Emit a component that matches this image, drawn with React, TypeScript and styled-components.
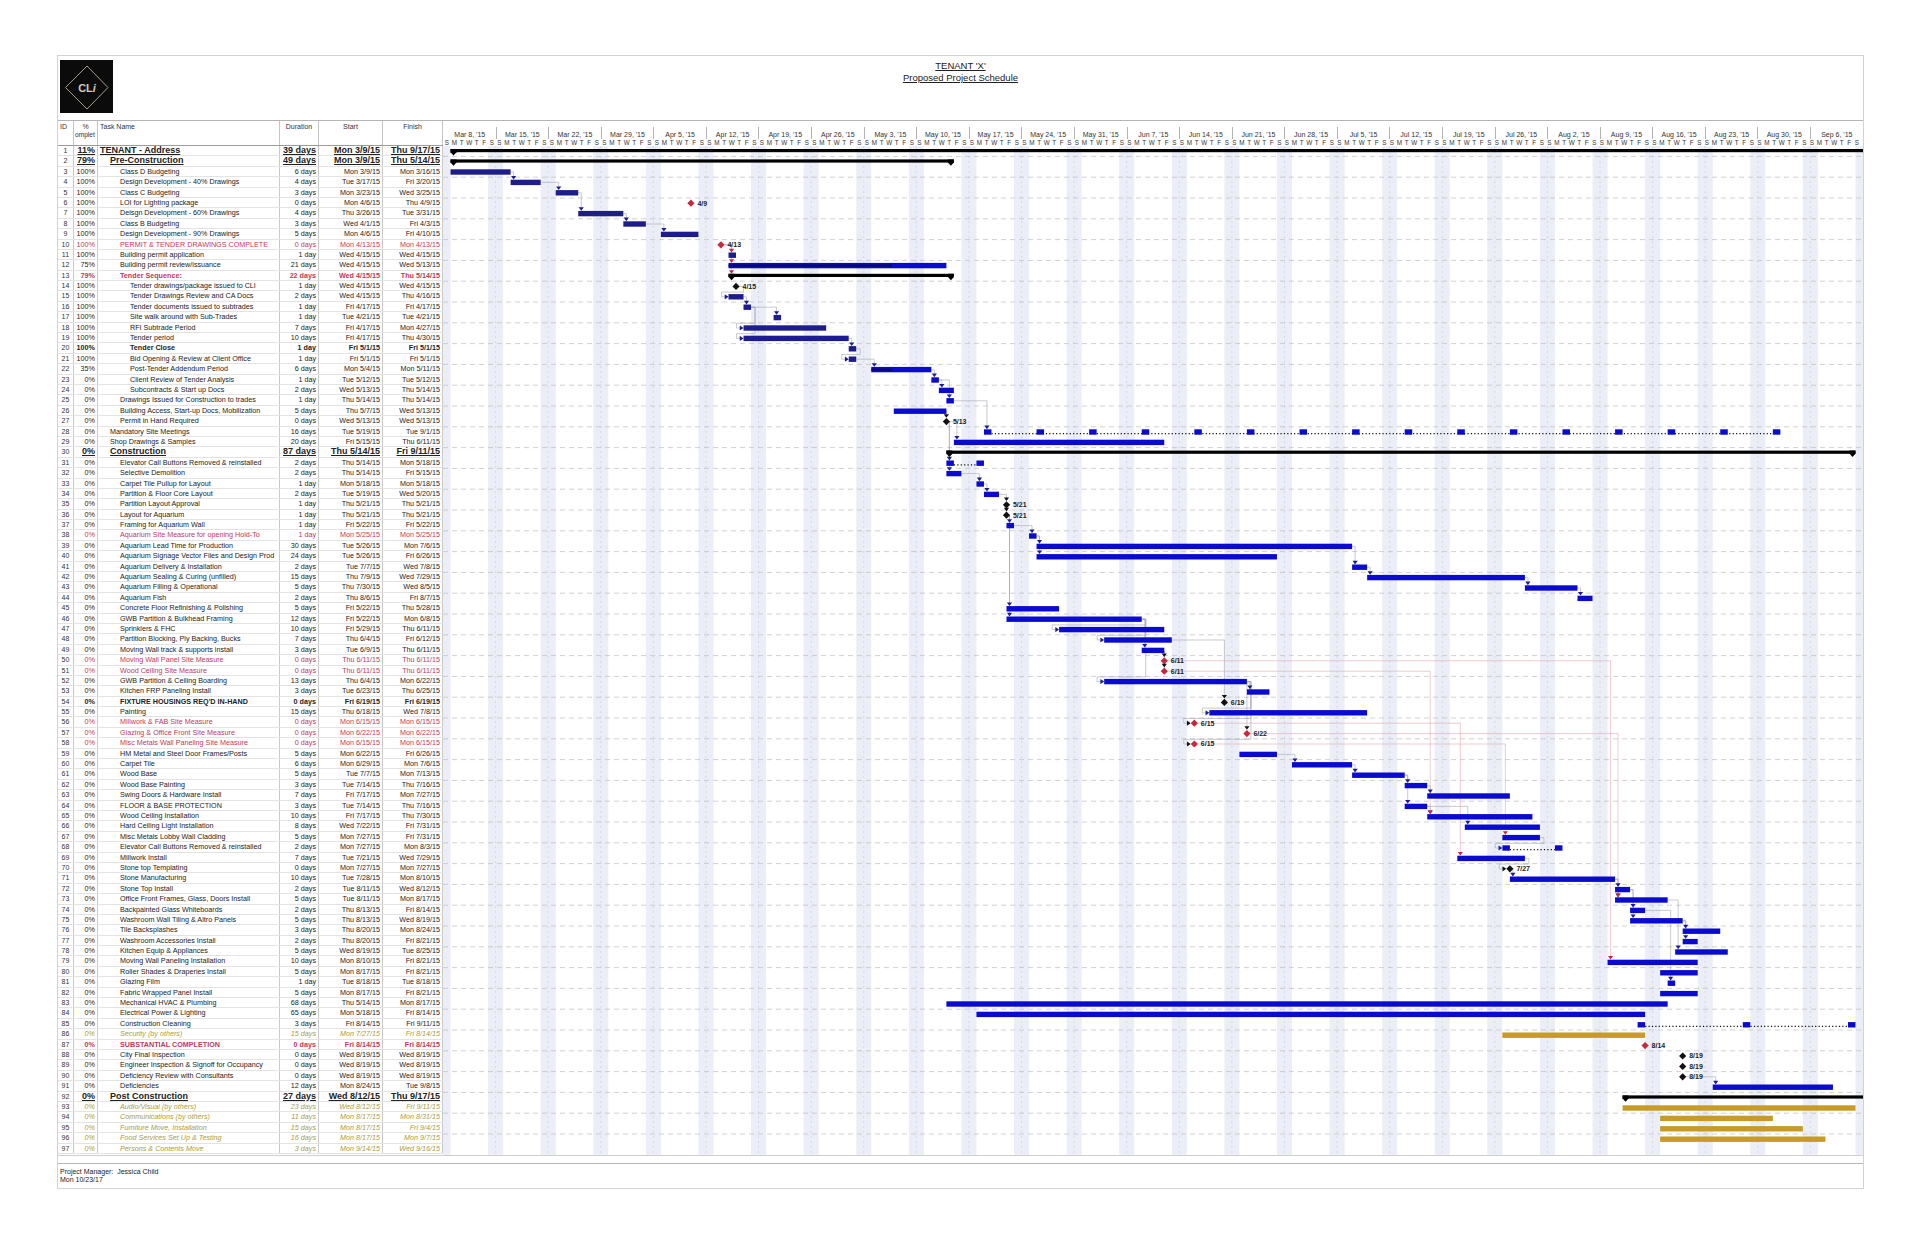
import React from "react";
import styled, { createGlobalStyle } from "styled-components";

const RH = 10.4;
const WEEKS = 27;
const CHART_W = 1420;
const DW = CHART_W / (WEEKS * 7);
const WEEK_W = CHART_W / WEEKS;
const ROWS = 97;
const H = ROWS * RH;

const NAVY = "#1d1d8c";
const BLUE = "#0b0bd0";
const GOLD = "#c79b25";
const RED = "#c8283c";
const REDTXT = "#c2385a";
const OLIVE = "#a99d45";

type Kind = "n" | "s" | "r" | "rb" | "b" | "g";
type Row = [string, string, number, string, string, string, Kind];

const data: Row[] = [
  ["11%", "TENANT - Address", 1, "39 days", "Mon 3/9/15", "Thu 9/17/15", "s"],
  ["79%", "Pre-Construction", 2, "49 days", "Mon 3/9/15", "Thu 5/14/15", "s"],
  ["100%", "Class D Budgeting", 3, "6 days", "Mon 3/9/15", "Mon 3/16/15", "n"],
  ["100%", "Design Development - 40% Drawings", 3, "4 days", "Tue 3/17/15", "Fri 3/20/15", "n"],
  ["100%", "Class C Budgeting", 3, "3 days", "Mon 3/23/15", "Wed 3/25/15", "n"],
  ["100%", "LOI for Lighting package", 3, "0 days", "Mon 4/6/15", "Thu 4/9/15", "n"],
  ["100%", "Deisgn Development - 60% Drawings", 3, "4 days", "Thu 3/26/15", "Tue 3/31/15", "n"],
  ["100%", "Class B Budgeting", 3, "3 days", "Wed 4/1/15", "Fri 4/3/15", "n"],
  ["100%", "Design Development - 90% Drawings", 3, "5 days", "Mon 4/6/15", "Fri 4/10/15", "n"],
  ["100%", "PERMIT & TENDER DRAWINGS COMPLETE", 3, "0 days", "Mon 4/13/15", "Mon 4/13/15", "r"],
  ["100%", "Building permit application", 3, "1 day", "Wed 4/15/15", "Wed 4/15/15", "n"],
  ["75%", "Building permit review/issuance", 3, "21 days", "Wed 4/15/15", "Wed 5/13/15", "n"],
  ["79%", "Tender Sequence:", 3, "22 days", "Wed 4/15/15", "Thu 5/14/15", "rb"],
  ["100%", "Tender drawings/package issued to CLI", 4, "1 day", "Wed 4/15/15", "Wed 4/15/15", "n"],
  ["100%", "Tender Drawings Review and CA Docs", 4, "2 days", "Wed 4/15/15", "Thu 4/16/15", "n"],
  ["100%", "Tender documents issued to subtrades", 4, "1 day", "Fri 4/17/15", "Fri 4/17/15", "n"],
  ["100%", "Site walk around with Sub-Trades", 4, "1 day", "Tue 4/21/15", "Tue 4/21/15", "n"],
  ["100%", "RFI Subtrade Period", 4, "7 days", "Fri 4/17/15", "Mon 4/27/15", "n"],
  ["100%", "Tender period", 4, "10 days", "Fri 4/17/15", "Thu 4/30/15", "n"],
  ["100%", "Tender Close", 4, "1 day", "Fri 5/1/15", "Fri 5/1/15", "b"],
  ["100%", "Bid Opening & Review at Client Office", 4, "1 day", "Fri 5/1/15", "Fri 5/1/15", "n"],
  ["35%", "Post-Tender Addendum Period", 4, "6 days", "Mon 5/4/15", "Mon 5/11/15", "n"],
  ["0%", "Client Review of Tender Analysis", 4, "1 day", "Tue 5/12/15", "Tue 5/12/15", "n"],
  ["0%", "Subcontracts & Start up Docs", 4, "2 days", "Wed 5/13/15", "Thu 5/14/15", "n"],
  ["0%", "Drawings Issued for Construction to trades", 3, "1 day", "Thu 5/14/15", "Thu 5/14/15", "n"],
  ["0%", "Building Access, Start-up Docs, Mobilization", 3, "5 days", "Thu 5/7/15", "Wed 5/13/15", "n"],
  ["0%", "Permit in Hand Required", 3, "0 days", "Wed 5/13/15", "Wed 5/13/15", "n"],
  ["0%", "Mandatory Site Meetings", 2, "16 days", "Tue 5/19/15", "Tue 9/1/15", "n"],
  ["0%", "Shop Drawings & Samples", 2, "20 days", "Fri 5/15/15", "Thu 6/11/15", "n"],
  ["0%", "Construction", 2, "87 days", "Thu 5/14/15", "Fri 9/11/15", "s"],
  ["0%", "Elevator Call Buttons Removed & reinstalled", 3, "2 days", "Thu 5/14/15", "Mon 5/18/15", "n"],
  ["0%", "Selective Demolition", 3, "2 days", "Thu 5/14/15", "Fri 5/15/15", "n"],
  ["0%", "Carpet Tile Pullup for Layout", 3, "1 day", "Mon 5/18/15", "Mon 5/18/15", "n"],
  ["0%", "Partition & Floor Core Layout", 3, "2 days", "Tue 5/19/15", "Wed 5/20/15", "n"],
  ["0%", "Partition Layout Approval", 3, "1 day", "Thu 5/21/15", "Thu 5/21/15", "n"],
  ["0%", "Layout for Aquarium", 3, "1 day", "Thu 5/21/15", "Thu 5/21/15", "n"],
  ["0%", "Framing for Aquarium Wall", 3, "1 day", "Fri 5/22/15", "Fri 5/22/15", "n"],
  ["0%", "Aquarium Site Measure for opening Hold-To", 3, "1 day", "Mon 5/25/15", "Mon 5/25/15", "r"],
  ["0%", "Aquarium Lead Time for Production", 3, "30 days", "Tue 5/26/15", "Mon 7/6/15", "n"],
  ["0%", "Aquarium Signage Vector Files and Design Prod", 3, "24 days", "Tue 5/26/15", "Fri 6/26/15", "n"],
  ["0%", "Aquarium Delivery & Installation", 3, "2 days", "Tue 7/7/15", "Wed 7/8/15", "n"],
  ["0%", "Aquarium Sealing & Curing (unfilled)", 3, "15 days", "Thu 7/9/15", "Wed 7/29/15", "n"],
  ["0%", "Aquarium Filling & Operational", 3, "5 days", "Thu 7/30/15", "Wed 8/5/15", "n"],
  ["0%", "Aquarium Fish", 3, "2 days", "Thu 8/6/15", "Fri 8/7/15", "n"],
  ["0%", "Concrete Floor Refinishing & Polishing", 3, "5 days", "Fri 5/22/15", "Thu 5/28/15", "n"],
  ["0%", "GWB Partition & Bulkhead Framing", 3, "12 days", "Fri 5/22/15", "Mon 6/8/15", "n"],
  ["0%", "Sprinklers & FHC", 3, "10 days", "Fri 5/29/15", "Thu 6/11/15", "n"],
  ["0%", "Partition Blocking, Ply Backing, Bucks", 3, "7 days", "Thu 6/4/15", "Fri 6/12/15", "n"],
  ["0%", "Moving Wall track & supports install", 3, "3 days", "Tue 6/9/15", "Thu 6/11/15", "n"],
  ["0%", "Moving Wall Panel Site Measure", 3, "0 days", "Thu 6/11/15", "Thu 6/11/15", "r"],
  ["0%", "Wood Ceiling Site Measure", 3, "0 days", "Thu 6/11/15", "Thu 6/11/15", "r"],
  ["0%", "GWB Partition & Ceiling Boarding", 3, "13 days", "Thu 6/4/15", "Mon 6/22/15", "n"],
  ["0%", "Kitchen FRP Paneling Install", 3, "3 days", "Tue 6/23/15", "Thu 6/25/15", "n"],
  ["0%", "FIXTURE HOUSINGS REQ'D IN-HAND", 3, "0 days", "Fri 6/19/15", "Fri 6/19/15", "b"],
  ["0%", "Painting", 3, "15 days", "Thu 6/18/15", "Wed 7/8/15", "n"],
  ["0%", "Millwork & FAB Site Measure", 3, "0 days", "Mon 6/15/15", "Mon 6/15/15", "r"],
  ["0%", "Glazing & Office Front Site Measure", 3, "0 days", "Mon 6/22/15", "Mon 6/22/15", "r"],
  ["0%", "Misc Metals Wall Paneling Site Measure", 3, "0 days", "Mon 6/15/15", "Mon 6/15/15", "r"],
  ["0%", "HM Metal and Steel Door Frames/Posts", 3, "5 days", "Mon 6/22/15", "Fri 6/26/15", "n"],
  ["0%", "Carpet Tile", 3, "6 days", "Mon 6/29/15", "Mon 7/6/15", "n"],
  ["0%", "Wood Base", 3, "5 days", "Tue 7/7/15", "Mon 7/13/15", "n"],
  ["0%", "Wood Base Painting", 3, "3 days", "Tue 7/14/15", "Thu 7/16/15", "n"],
  ["0%", "Swing Doors & Hardware Install", 3, "7 days", "Fri 7/17/15", "Mon 7/27/15", "n"],
  ["0%", "FLOOR & BASE PROTECTION", 3, "3 days", "Tue 7/14/15", "Thu 7/16/15", "n"],
  ["0%", "Wood Ceiling Installation", 3, "10 days", "Fri 7/17/15", "Thu 7/30/15", "n"],
  ["0%", "Hard Ceiling Light Installation", 3, "8 days", "Wed 7/22/15", "Fri 7/31/15", "n"],
  ["0%", "Misc Metals Lobby Wall Cladding", 3, "5 days", "Mon 7/27/15", "Fri 7/31/15", "n"],
  ["0%", "Elevator Call Buttons Removed & reinstalled", 3, "2 days", "Mon 7/27/15", "Mon 8/3/15", "n"],
  ["0%", "Millwork Install", 3, "7 days", "Tue 7/21/15", "Wed 7/29/15", "n"],
  ["0%", "Stone top Templating", 3, "0 days", "Mon 7/27/15", "Mon 7/27/15", "n"],
  ["0%", "Stone Manufacturing", 3, "10 days", "Tue 7/28/15", "Mon 8/10/15", "n"],
  ["0%", "Stone Top Install", 3, "2 days", "Tue 8/11/15", "Wed 8/12/15", "n"],
  ["0%", "Office Front Frames, Glass, Doors Install", 3, "5 days", "Tue 8/11/15", "Mon 8/17/15", "n"],
  ["0%", "Backpainted Glass Whiteboards", 3, "2 days", "Thu 8/13/15", "Fri 8/14/15", "n"],
  ["0%", "Washroom Wall Tiling & Altro Panels", 3, "5 days", "Thu 8/13/15", "Wed 8/19/15", "n"],
  ["0%", "Tile Backsplashes", 3, "3 days", "Thu 8/20/15", "Mon 8/24/15", "n"],
  ["0%", "Washroom Accessories Install", 3, "2 days", "Thu 8/20/15", "Fri 8/21/15", "n"],
  ["0%", "Kitchen Equip & Appliances", 3, "5 days", "Wed 8/19/15", "Tue 8/25/15", "n"],
  ["0%", "Moving Wall Paneling Installation", 3, "10 days", "Mon 8/10/15", "Fri 8/21/15", "n"],
  ["0%", "Roller Shades & Draperies Install", 3, "5 days", "Mon 8/17/15", "Fri 8/21/15", "n"],
  ["0%", "Glazing Film", 3, "1 day", "Tue 8/18/15", "Tue 8/18/15", "n"],
  ["0%", "Fabric Wrapped Panel Install", 3, "5 days", "Mon 8/17/15", "Fri 8/21/15", "n"],
  ["0%", "Mechanical HVAC & Plumbing", 3, "68 days", "Thu 5/14/15", "Mon 8/17/15", "n"],
  ["0%", "Electrical Power & Lighting", 3, "65 days", "Mon 5/18/15", "Fri 8/14/15", "n"],
  ["0%", "Construction Cleaning", 3, "3 days", "Fri 8/14/15", "Fri 9/11/15", "n"],
  ["0%", "Security (by others)", 3, "15 days", "Mon 7/27/15", "Fri 8/14/15", "g"],
  ["0%", "SUBSTANTIAL COMPLETION", 3, "0 days", "Fri 8/14/15", "Fri 8/14/15", "rb"],
  ["0%", "City Final Inspection", 3, "0 days", "Wed 8/19/15", "Wed 8/19/15", "n"],
  ["0%", "Engineer Inspection & Signoff for Occupancy", 3, "0 days", "Wed 8/19/15", "Wed 8/19/15", "n"],
  ["0%", "Deficiency Review with Consultants", 3, "0 days", "Wed 8/19/15", "Wed 8/19/15", "n"],
  ["0%", "Deficiencies", 3, "12 days", "Mon 8/24/15", "Tue 9/8/15", "n"],
  ["0%", "Post Construction", 2, "27 days", "Wed 8/12/15", "Thu 9/17/15", "s"],
  ["0%", "Audio/Visual (by others)", 3, "23 days", "Wed 8/12/15", "Fri 9/11/15", "g"],
  ["0%", "Communications (by others)", 3, "11 days", "Mon 8/17/15", "Mon 8/31/15", "g"],
  ["0%", "Furniture Move, Installation", 3, "15 days", "Mon 8/17/15", "Fri 9/4/15", "g"],
  ["0%", "Food Services Set Up & Testing", 3, "16 days", "Mon 8/17/15", "Mon 9/7/15", "g"],
  ["0%", "Persons & Contents Move", 3, "3 days", "Mon 9/14/15", "Wed 9/16/15", "g"],
];

type Task = {
  id: number;
  pct: string;
  name: string;
  lvl: number;
  dur: string;
  start: string;
  finish: string;
  k: Kind;
};

const tasks: Task[] = data.map((r, i) => ({
  id: i + 1,
  pct: r[0],
  name: r[1],
  lvl: r[2],
  dur: r[3],
  start: r[4],
  finish: r[5],
  k: r[6],
}));

const dayOf = (s: string) => {
  const md = s.includes(" ") ? s.split(" ")[1] : s;
  const [m, d] = md.split("/").map(Number);
  return Math.round((Date.UTC(2015, m - 1, d) - Date.UTC(2015, 2, 8)) / 864e5);
};
const xd = (d: number) => d * DW;
const rowY = (id: number) => (id - 0.5) * RH;

const SUMMARY = new Set([1, 2, 13, 30, 92]);
const MS_EXTRA = new Set([14, 35, 36]);
const RED_MS = new Set([6, 10, 50, 51, 56, 57, 58, 87]);

const SPLITS: Record<number, number[]> = {
  28: Array.from({ length: 16 }, (_, k) => dayOf("5/19") + 7 * k),
  31: [dayOf("5/14"), dayOf("5/18")],
  68: [dayOf("7/27"), dayOf("8/3")],
  85: [dayOf("8/14"), dayOf("8/28"), dayOf("9/11")],
};

// predecessor links as read off the chart
const PREDS: Record<number, number[]> = {
  4: [3], 5: [4], 7: [5], 8: [7], 9: [8], 11: [10], 12: [10], 13: [10],
  15: [14], 16: [15], 17: [16], 18: [16], 19: [16], 20: [19], 21: [20],
  22: [21], 23: [22], 24: [23], 25: [23], 27: [26], 28: [25], 29: [27],
  31: [27], 32: [27], 33: [32], 34: [33], 35: [34], 36: [35], 37: [36],
  38: [37], 39: [38], 40: [38], 41: [39], 42: [41], 43: [42], 44: [43],
  45: [36], 46: [36], 47: [46], 48: [46], 49: [46], 50: [49], 51: [49],
  52: [46], 53: [52], 54: [48], 55: [52], 56: [52], 57: [52], 58: [52],
  60: [59], 61: [60], 62: [61], 63: [62], 64: [61], 65: [64, 51], 66: [64],
  67: [58], 68: [67], 69: [56], 70: [69], 71: [70], 72: [71], 73: [71, 57],
  74: [72], 75: [72], 76: [75], 77: [75], 78: [73], 79: [50], 81: [74], 91: [90],
};

type Geo = { kind: "bar" | "ms" | "sum" | "split"; x1: number; x2: number; pieces?: number[] };

const geoOf = (t: Task): Geo => {
  if (SUMMARY.has(t.id)) return { kind: "sum", x1: xd(dayOf(t.start)), x2: xd(dayOf(t.finish) + 1) };
  if (t.dur === "0 days" || MS_EXTRA.has(t.id)) {
    const m = xd(dayOf(t.finish) + 1);
    return { kind: "ms", x1: m, x2: m };
  }
  const sp = SPLITS[t.id];
  if (sp) return { kind: "split", x1: xd(sp[0]), x2: xd(sp[sp.length - 1] + 1), pieces: sp };
  return { kind: "bar", x1: xd(dayOf(t.start)), x2: xd(dayOf(t.finish) + 1) };
};

const G: Record<number, Geo> = {};
tasks.forEach((t) => (G[t.id] = geoOf(t)));

const MONTHS = ["Jan", "Feb", "Mar", "Apr", "May", "Jun", "Jul", "Aug", "Sep", "Oct", "Nov", "Dec"];
const weekLabels = Array.from({ length: WEEKS }, (_, k) => {
  const d = new Date(Date.UTC(2015, 2, 8 + 7 * k));
  return `${MONTHS[d.getUTCMonth()]} ${d.getUTCDate()}, '15`;
});
const DAY_LETTERS = ["S", "M", "T", "W", "T", "F", "S"];

const GlobalStyle = createGlobalStyle`
  html, body {
    margin: 0;
    padding: 0;
    background: #ffffff;
  }
  body {
    font-family: "Liberation Sans", Arial, sans-serif;
    color: #222;
  }
`;

const Page = styled.div`
  width: 1920px;
  padding-top: 55px;
`;

const Frame = styled.div`
  margin-left: 57px;
  width: 1807px;
  border: 1px solid #d2d2d2;
  box-sizing: border-box;
`;

const Masthead = styled.div`
  height: 64px;
  display: grid;
  grid-template-columns: 1fr auto 1fr;
`;

const LogoBox = styled.div`
  margin: 4px 0 0 2px;
  width: 53px;
  height: 53px;
`;

const Title = styled.div`
  margin-top: 4px;
  text-align: center;
  font-size: 9.5px;
  line-height: 12px;
  color: #222;
  text-decoration: underline;
`;

const Schedule = styled.div`
  display: flex;
  border-top: 1px solid #b4b4b4;
  border-bottom: 1px solid #cfcfcf;
`;

const COLS = "16px 24px 182px 39px 64px 60px";

const Table = styled.div`
  width: 385px;
  flex: none;
`;

const HeadRow = styled.div`
  display: grid;
  grid-template-columns: ${COLS};
  height: 25px;
  box-sizing: border-box;
  border-bottom: 1px solid #9c9c9c;
`;

const HeadCell = styled.div<{ $align?: string }>`
  border-right: 1px solid #c4c4c4;
  box-sizing: border-box;
  overflow: hidden;
  white-space: nowrap;
  font-size: 7px;
  line-height: 8px;
  color: #333;
  padding: 2px 2px 0 2px;
  text-align: ${(p) => p.$align || "left"};
`;

const PctHead = styled.span`
  display: block;
  text-align: center;
`;

const ClipHead = styled.span`
  display: block;
  margin-left: -1px;
  font-size: 6.6px;
`;

const TaskRow = styled.div<{ $k: Kind }>`
  display: grid;
  grid-template-columns: ${COLS};
  height: ${RH}px;
  box-sizing: border-box;
  border-bottom: 1px solid #e3e3e3;
  line-height: ${RH - 1}px;
  font-size: ${(p) => (p.$k === "s" ? "9px" : "7.2px")};
  font-weight: ${(p) => (p.$k === "s" || p.$k === "b" || p.$k === "rb" ? 700 : 400)};
  font-style: ${(p) => (p.$k === "g" ? "italic" : "normal")};
  color: ${(p) => (p.$k === "r" || p.$k === "rb" ? REDTXT : p.$k === "g" ? OLIVE : "#222")};
`;

const Cell = styled.div<{ $align?: string; $indent?: number; $under?: boolean }>`
  border-right: 1px solid #c9c9c9;
  box-sizing: border-box;
  overflow: hidden;
  white-space: nowrap;
  text-align: ${(p) => p.$align || "left"};
  padding: 0 2px 0 ${(p) => 2 + (p.$indent || 0)}px;
  text-decoration: ${(p) => (p.$under ? "underline" : "none")};
`;

const IdCell = styled(Cell)`
  font-size: 7px;
  font-weight: 400;
  font-style: normal;
  color: #333;
  text-align: center;
  padding: 0;
`;

const Chart = styled.div`
  width: ${CHART_W}px;
  flex: none;
`;

const TimeScale = styled.div`
  height: 25px;
  display: flex;
  flex-direction: column;
`;

const WeekTier = styled.div`
  height: 18px;
  display: flex;
  align-items: flex-end;
`;

const WeekCell = styled.div`
  width: ${WEEK_W}px;
  flex: none;
  height: 12px;
  box-sizing: border-box;
  border-left: 1px solid #b2b2b2;
  padding-top: 3px;
  text-align: center;
  font-size: 7px;
  line-height: 9px;
  color: #333;
  white-space: nowrap;
  overflow: hidden;
  &:first-child {
    border-left-color: transparent;
  }
`;

const DayTier = styled.div`
  height: 7px;
  display: flex;
`;

const DayCell = styled.div`
  width: ${DW}px;
  flex: none;
  text-align: center;
  font-size: 6.3px;
  line-height: 7px;
  color: #333;
`;

const ChartSvg = styled.svg`
  display: block;
  overflow: hidden;
`;

const Footer = styled.div`
  margin-top: 7px;
  border-top: 1px solid #b6b6b6;
  padding: 4px 0 4px 2px;
  font-size: 7px;
  line-height: 8px;
  color: #222;
`;

function Logo() {
  return (
    <svg width="53" height="53" viewBox="0 0 53 53">
      <rect width="53" height="53" fill="#0b0b0b" />
      <polygon points="27,6 48,27.5 27,49 5.5,27.5" fill="none" stroke="#a89d88" strokeWidth="1" />
      <text
        x="27"
        y="31.5"
        textAnchor="middle"
        fontFamily="Liberation Sans, Arial, sans-serif"
        fontWeight="bold"
        fontSize="11"
        fill="#d2c9b6"
      >
        CL<tspan fontStyle="italic">i</tspan>
      </text>
    </svg>
  );
}

function linkParts(pid: number, sid: number) {
  const p = G[pid];
  const s = G[sid];
  const py = rowY(pid);
  const sy = rowY(sid);
  const red = RED_MS.has(pid);
  const from = p.kind === "ms" ? p.x2 + 3.5 : p.x2;
  if (s.x1 >= p.x2 - 0.5) {
    const ax = s.kind === "ms" ? s.x1 : s.x1 + 3;
    const top = sy - (s.kind === "ms" ? 3.8 : s.kind === "sum" ? 2.2 : 2.8);
    return {
      d: `M${from},${py} H${ax} V${top - 3}`,
      arrow: `${ax - 2.6},${top - 3.6} ${ax + 2.6},${top - 3.6} ${ax},${top}`,
      red,
      s,
    };
  }
  const tip = s.kind === "ms" ? s.x1 - 3.6 : s.x1;
  return {
    d: `M${from},${py} h4 V${sy - RH / 2 + 0.5} H${tip - 7} V${sy} H${tip - 3}`,
    arrow: `${tip - 3.8},${sy - 2.6} ${tip - 3.8},${sy + 2.6} ${tip},${sy}`,
    red,
    s,
  };
}

const links = Object.entries(PREDS).flatMap(([sid, ps]) =>
  ps.map((pid) => ({ key: `${pid}-${sid}`, ...linkParts(pid, Number(sid)) }))
);

function barFill(t: Task) {
  if (t.k === "g") return GOLD;
  return t.pct === "100%" ? NAVY : BLUE;
}

function TaskShape({ t }: { t: Task }) {
  const g = G[t.id];
  const cy = rowY(t.id);
  if (g.kind === "sum") {
    const a = g.x1;
    const b = g.x2;
    return (
      <g fill="#000">
        <rect x={a} y={cy - 2.2} width={b - a} height={3.2} />
        <polygon points={`${a},${cy - 2.2} ${a + 6},${cy - 2.2} ${a + 6},${cy + 1} ${a + 3},${cy + 4.2} ${a},${cy + 1}`} />
        <polygon points={`${b - 6},${cy - 2.2} ${b},${cy - 2.2} ${b},${cy + 1} ${b - 3},${cy + 4.2} ${b - 6},${cy + 1}`} />
      </g>
    );
  }
  if (g.kind === "ms") {
    const m = g.x1;
    const red = RED_MS.has(t.id);
    const label = t.finish.split(" ")[1].split("/").slice(0, 2).join("/");
    return (
      <g>
        <polygon
          points={`${m},${cy - 3.6} ${m + 3.6},${cy} ${m},${cy + 3.6} ${m - 3.6},${cy}`}
          fill={red ? RED : "#111"}
        />
        <text
          x={m + 6.5}
          y={cy + 2.5}
          fontSize="7"
          fontWeight="bold"
          fill="#222"
          fontFamily="Liberation Sans, Arial, sans-serif"
        >
          {label}
        </text>
      </g>
    );
  }
  if (g.kind === "split" && g.pieces) {
    const ps = g.pieces;
    return (
      <g>
        <line
          x1={xd(ps[0] + 1)}
          x2={xd(ps[ps.length - 1])}
          y1={cy + 1.6}
          y2={cy + 1.6}
          stroke="#111"
          strokeWidth="1.3"
          strokeDasharray="1.2 2.2"
        />
        {ps.map((d) => (
          <rect key={d} x={xd(d)} y={cy - 2.7} width={DW} height={5.4} fill={BLUE} />
        ))}
      </g>
    );
  }
  const pctNum = parseInt(t.pct, 10);
  return (
    <g>
      <rect x={g.x1} y={cy - 2.7} width={g.x2 - g.x1} height={5.4} fill={barFill(t)} />
      {pctNum > 0 && pctNum < 100 ? (
        <rect x={g.x1} y={cy - 1} width={((g.x2 - g.x1) * pctNum) / 100} height={2} fill="#0a0a55" />
      ) : null}
    </g>
  );
}

function GanttChart() {
  return (
    <ChartSvg width={CHART_W} height={H} viewBox={`0 0 ${CHART_W} ${H}`}>
      <rect x={0} y={0} width={DW} height={H} fill="#ebeef7" />
      {Array.from({ length: WEEKS }, (_, k) => (
        <rect key={`we${k}`} x={xd(7 * k + 6)} y={0} width={2 * DW} height={H} fill="#ebeef7" />
      ))}
      {Array.from({ length: WEEKS - 1 }, (_, k) => (
        <line
          key={`wl${k}`}
          x1={xd(7 * (k + 1))}
          x2={xd(7 * (k + 1))}
          y1={0}
          y2={H}
          stroke="#c6cad8"
          strokeWidth="0.6"
          strokeDasharray="2 3"
        />
      ))}
      {Array.from({ length: Math.floor(ROWS / 2) }, (_, j) => (
        <line
          key={`hl${j}`}
          x1={0}
          x2={CHART_W}
          y1={(2 * j + 1) * RH}
          y2={(2 * j + 1) * RH}
          stroke="#bdbdbd"
          strokeWidth="0.7"
          strokeDasharray="5 4"
        />
      ))}
      {links.map((l) => (
        <path key={l.key} d={l.d} fill="none" stroke={l.red ? "#e0a8ae" : "#a3a4b6"} strokeWidth="0.6" />
      ))}
      {tasks.map((t) => (
        <TaskShape key={t.id} t={t} />
      ))}
      {links.map((l) => (
        <polygon
          key={`a${l.key}`}
          points={l.arrow}
          fill={l.red ? RED : l.s.kind === "ms" || l.s.kind === "sum" ? "#111" : NAVY}
        />
      ))}
    </ChartSvg>
  );
}

export default function App() {
  return (
    <>
      <GlobalStyle />
      <Page>
        <Frame>
          <Masthead>
            <LogoBox>
              <Logo />
            </LogoBox>
            <Title>
              <div>TENANT 'X'</div>
              <div>Proposed Project Schedule</div>
            </Title>
            <div />
          </Masthead>
          <Schedule>
            <Table>
              <HeadRow>
                <HeadCell>ID</HeadCell>
                <HeadCell>
                  <PctHead>%</PctHead>
                  <ClipHead>omplet</ClipHead>
                </HeadCell>
                <HeadCell>Task Name</HeadCell>
                <HeadCell $align="center">Duration</HeadCell>
                <HeadCell $align="center">Start</HeadCell>
                <HeadCell $align="center">Finish</HeadCell>
              </HeadRow>
              {tasks.map((t) => {
                const under = t.k === "s";
                return (
                  <TaskRow key={t.id} $k={t.k}>
                    <IdCell>{t.id}</IdCell>
                    <Cell $align="right" $under={under}>
                      {t.pct}
                    </Cell>
                    <Cell $indent={(t.lvl - 1) * 10} $under={under}>
                      {t.name}
                    </Cell>
                    <Cell $align="right" $under={under}>
                      {t.dur}
                    </Cell>
                    <Cell $align="right" $under={under}>
                      {t.start}
                    </Cell>
                    <Cell $align="right" $under={under}>
                      {t.finish}
                    </Cell>
                  </TaskRow>
                );
              })}
            </Table>
            <Chart>
              <TimeScale>
                <WeekTier>
                  {weekLabels.map((w) => (
                    <WeekCell key={w}>{w}</WeekCell>
                  ))}
                </WeekTier>
                <DayTier>
                  {Array.from({ length: WEEKS * 7 }, (_, i) => (
                    <DayCell key={i}>{DAY_LETTERS[i % 7]}</DayCell>
                  ))}
                </DayTier>
              </TimeScale>
              <GanttChart />
            </Chart>
          </Schedule>
          <Footer>
            <div>Project Manager:&nbsp; Jessica Child</div>
            <div>Mon 10/23/17</div>
          </Footer>
        </Frame>
      </Page>
    </>
  );
}
